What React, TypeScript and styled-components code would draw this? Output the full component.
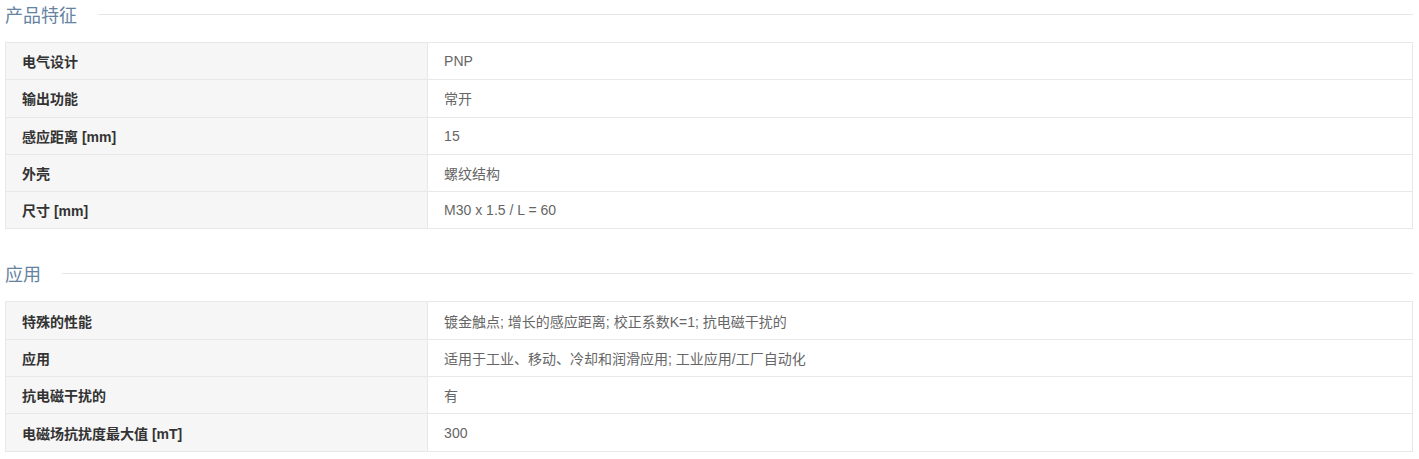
import { createGlobalStyle, styled } from 'styled-components'

const GlobalStyle = createGlobalStyle`
  html, body {
    margin: 0;
    padding: 0;
    background: #fff;
  }
  body {
    font-family: "Liberation Sans", "Noto Sans CJK SC", sans-serif;
  }
`

const Page = styled.div`
  padding: 0 6px 0 5px;
`

const Section = styled.section`
  & + & {
    margin-top: 30px;
  }
`

const Heading = styled.div`
  display: flex;
  align-items: center;
  gap: 21px;
  height: 28px;
  margin-bottom: 14px;
  .title {
    font-size: 18px;
    font-weight: 400;
    color: #6583a0;
    white-space: nowrap;
  }
  .line {
    flex: 1;
    height: 1px;
    background: #e6e6e6;
  }
`

const Table = styled.table`
  width: 100%;
  border-collapse: collapse;
  table-layout: fixed;
  font-size: 14px;
`

const Cell = styled.td<{ $label?: boolean }>`
  height: 37.3px;
  padding: 0 16px;
  border: 1px solid #e8e8e8;
  vertical-align: middle;
  box-sizing: border-box;
  width: ${p => (p.$label ? '30%' : 'auto')};
  background: ${p => (p.$label ? '#f6f6f6' : '#fff')};
  color: ${p => (p.$label ? '#333' : '#666')};
  font-weight: ${p => (p.$label ? 700 : 400)};
`

const sections: { title: string; rows: [string, string][] }[] = [
  {
    title: '产品特征',
    rows: [
      ['电气设计', 'PNP'],
      ['输出功能', '常开'],
      ['感应距离 [mm]', '15'],
      ['外壳', '螺纹结构'],
      ['尺寸 [mm]', 'M30 x 1.5 / L = 60'],
    ],
  },
  {
    title: '应用',
    rows: [
      ['特殊的性能', '镀金触点; 增长的感应距离; 校正系数K=1; 抗电磁干扰的'],
      ['应用', '适用于工业、移动、冷却和润滑应用; 工业应用/工厂自动化'],
      ['抗电磁干扰的', '有'],
      ['电磁场抗扰度最大值 [mT]', '300'],
    ],
  },
]

export default function App() {
  return (
    <Page>
      <GlobalStyle />
      {sections.map(section => (
        <Section key={section.title}>
          <Heading>
            <span className="title">{section.title}</span>
            <span className="line" />
          </Heading>
          <Table>
            <tbody>
              {section.rows.map(([label, value]) => (
                <tr key={label}>
                  <Cell $label>{label}</Cell>
                  <Cell>{value}</Cell>
                </tr>
              ))}
            </tbody>
          </Table>
        </Section>
      ))}
    </Page>
  )
}
